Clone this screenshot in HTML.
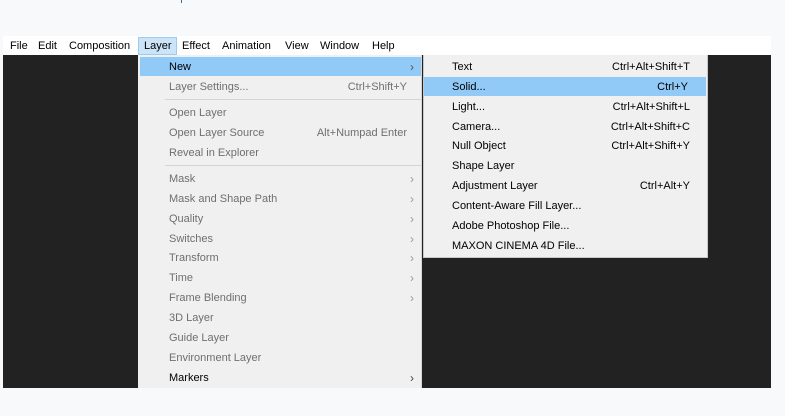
<!DOCTYPE html>
<html><head><meta charset="utf-8"><style>
body{margin:0;width:785px;height:416px;background:#f8f9fb;position:relative;overflow:hidden;font-family:"Liberation Sans",sans-serif;font-size:11px;color:#000}
.a{position:absolute}
.mb{left:3px;top:36px;width:768px;height:19px;background:#fff}
.mi{position:absolute;top:40px;line-height:13px}
.dark{left:3px;top:55px;width:768px;height:333px;background:#222}
.m1{left:138px;top:55px;width:283px;height:333px;background:#f0f0f0;border-right:1px solid #d6d6d6}
.row{position:absolute;left:0;width:283px;height:19px;line-height:21px}
.row .t{position:absolute;left:31px}
.row .s{position:absolute;right:14px}
.row .ar{position:absolute;left:272px;color:#999;font-size:12px}
.g{color:#6f6f6f}
.sep{position:absolute;left:27px;width:256px;height:1px;background:#d4d4d4}
.m2{left:423px;top:55px;width:283px;height:202px;background:#f0f0f0;border:1px solid #c8c8c8;border-top:none}
.r2{position:absolute;left:0;width:283px;height:19px;line-height:21px}
.r2 .t{position:absolute;left:28px}
.r2 .s{position:absolute;right:17px}
</style></head><body>
<div class="a" style="left:181px;top:0;width:1px;height:3px;background:#3a6ea5"></div>
<div class="a mb"></div>
<div class="a" style="left:138px;top:37px;width:37px;height:16px;background:#cce4f7;border:1px solid #99ccee"></div>
<span class="mi" style="left:10px">File</span>
<span class="mi" style="left:38px">Edit</span>
<span class="mi" style="left:69px">Composition</span>
<span class="mi" style="left:144px">Layer</span>
<span class="mi" style="left:182px">Effect</span>
<span class="mi" style="left:222px">Animation</span>
<span class="mi" style="left:285px">View</span>
<span class="mi" style="left:320px">Window</span>
<span class="mi" style="left:372px">Help</span>
<div class="a dark"></div>
<div class="a m1">
<div class="row" style="top:2px;left:2px;width:281px;background:#91c9f7"><span class="t" style="left:29px">New</span><span class="ar" style="left:270px;color:#555">›</span></div>
<div class="row g" style="top:22px"><span class="t">Layer Settings...</span><span class="s">Ctrl+Shift+Y</span></div>
<div class="sep" style="top:44px"></div>
<div class="row g" style="top:48px"><span class="t">Open Layer</span></div>
<div class="row g" style="top:68px"><span class="t">Open Layer Source</span><span class="s">Alt+Numpad Enter</span></div>
<div class="row g" style="top:88px"><span class="t">Reveal in Explorer</span></div>
<div class="sep" style="top:110px"></div>
<div class="row g" style="top:114px"><span class="t">Mask</span><span class="ar">›</span></div>
<div class="row g" style="top:134px"><span class="t">Mask and Shape Path</span><span class="ar">›</span></div>
<div class="row g" style="top:154px"><span class="t">Quality</span><span class="ar">›</span></div>
<div class="row g" style="top:174px"><span class="t">Switches</span><span class="ar">›</span></div>
<div class="row g" style="top:193px"><span class="t">Transform</span><span class="ar">›</span></div>
<div class="row g" style="top:213px"><span class="t">Time</span><span class="ar">›</span></div>
<div class="row g" style="top:233px"><span class="t">Frame Blending</span><span class="ar">›</span></div>
<div class="row g" style="top:253px"><span class="t">3D Layer</span></div>
<div class="row g" style="top:273px"><span class="t">Guide Layer</span></div>
<div class="row g" style="top:293px"><span class="t">Environment Layer</span></div>
<div class="row" style="top:313px"><span class="t">Markers</span><span class="ar" style="color:#444">›</span></div>
</div>
<div class="a m2">
<div class="r2" style="top:2px"><span class="t">Text</span><span class="s">Ctrl+Alt+Shift+T</span></div>
<div class="r2" style="top:22px;background:#91c9f7;height:19px;width:282px"><span class="t">Solid...</span><span class="s" style="right:18px">Ctrl+Y</span></div>
<div class="r2" style="top:42px"><span class="t">Light...</span><span class="s">Ctrl+Alt+Shift+L</span></div>
<div class="r2" style="top:62px"><span class="t">Camera...</span><span class="s">Ctrl+Alt+Shift+C</span></div>
<div class="r2" style="top:81px"><span class="t">Null Object</span><span class="s">Ctrl+Alt+Shift+Y</span></div>
<div class="r2" style="top:101px"><span class="t">Shape Layer</span></div>
<div class="r2" style="top:121px"><span class="t">Adjustment Layer</span><span class="s">Ctrl+Alt+Y</span></div>
<div class="r2" style="top:141px"><span class="t">Content-Aware Fill Layer...</span></div>
<div class="r2" style="top:161px"><span class="t">Adobe Photoshop File...</span></div>
<div class="r2" style="top:181px"><span class="t">MAXON CINEMA 4D File...</span></div>
</div>
</body></html>
